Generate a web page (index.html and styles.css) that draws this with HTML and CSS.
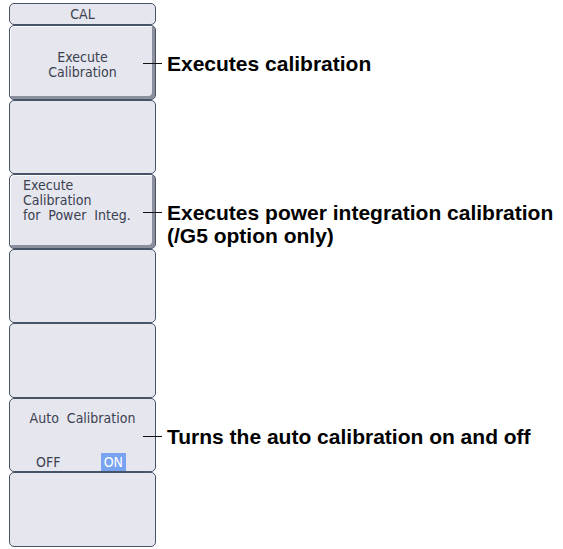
FILE: index.html
```html
<!DOCTYPE html>
<html lang="en">
<head>
  <meta charset="UTF-8">
  <meta name="viewport" content="width=device-width, initial-scale=1.0">
  <title>CAL Menu</title>
  <link rel="stylesheet" href="styles.css">
</head>
<body>
  <div class="page">
    <div class="title-key">CAL</div>

    <div class="menu">
      <div class="row">
        <div class="key raised centered">Execute<br>Calibration</div>
        <div class="note">
          <span class="leader"></span>
          <p>Executes calibration</p>
        </div>
      </div>

      <div class="row">
        <div class="key"></div>
      </div>

      <div class="row">
        <div class="key raised left">Execute<br>Calibration<br>for Power Integ.</div>
        <div class="note">
          <span class="leader"></span>
          <p>Executes power integration calibration<br>(/G5 option only)</p>
        </div>
      </div>

      <div class="row">
        <div class="key"></div>
      </div>

      <div class="row">
        <div class="key"></div>
      </div>

      <div class="row">
        <div class="key toggle">
          <div class="toggle-label">Auto Calibration</div>
          <div class="toggle-options">
            <span class="option">OFF</span>
            <span class="option selected">ON</span>
          </div>
        </div>
        <div class="note">
          <span class="leader"></span>
          <p>Turns the auto calibration on and off</p>
        </div>
      </div>

      <div class="row">
        <div class="key"></div>
      </div>
    </div>
  </div>
</body>
</html>
```

FILE: styles.css
```css
body {
  margin: 0;
  background: #fff;
  font-family: "Liberation Sans", Arial, sans-serif;
}

.page {
  padding: 3px 0 0 9px;
}

/* soft keys on the left */
.title-key,
.key {
  box-sizing: border-box;
  width: 147px;
  border: 1px solid #475366;
  border-radius: 5px;
  background: #e6e6ee;
  color: #3a4150;
  font-family: "DejaVu Sans Condensed", "DejaVu Sans", sans-serif;
  font-size: 14px;
  word-spacing: 4px;
}

.title-key {
  height: 22px;
  line-height: 20px;
  text-align: center;
}

.menu {
  display: flex;
  flex-direction: column;
  height: 522px;
}

.row {
  flex: 1;
  display: flex;
  align-items: stretch;
}

.key {
  flex: none;
}

.raised {
  box-shadow: inset -3px -3px 0 #8c909e, inset 1px 1px 0 #fbfbfe;
}

.centered {
  display: flex;
  align-items: center;
  justify-content: center;
  padding-top: 5px;
  text-align: center;
  line-height: 15px;
}

.left {
  padding: 3px 0 0 13px;
  line-height: 15px;
}

.toggle {
  padding-top: 11px;
}

.toggle-label {
  text-align: center;
  line-height: 16px;
}

.toggle-options {
  display: flex;
  justify-content: space-between;
  padding: 0 29px 0 23px;
  margin-top: 27px;
}

.option {
  line-height: 18px;
  padding: 0 3px;
}

.option.selected {
  background: #78a3f0;
  color: #fff;
}

/* callouts on the right */
.note {
  display: flex;
  align-items: flex-start;
  gap: 5px;
  margin: 27px 0 0 -13px;
}

.leader {
  width: 19px;
  height: 1px;
  margin-top: 11px;
  background: #111;
}

.note p {
  margin: 0;
  font-size: 21px;
  font-weight: bold;
  line-height: 23px;
  color: #000;
}
```
